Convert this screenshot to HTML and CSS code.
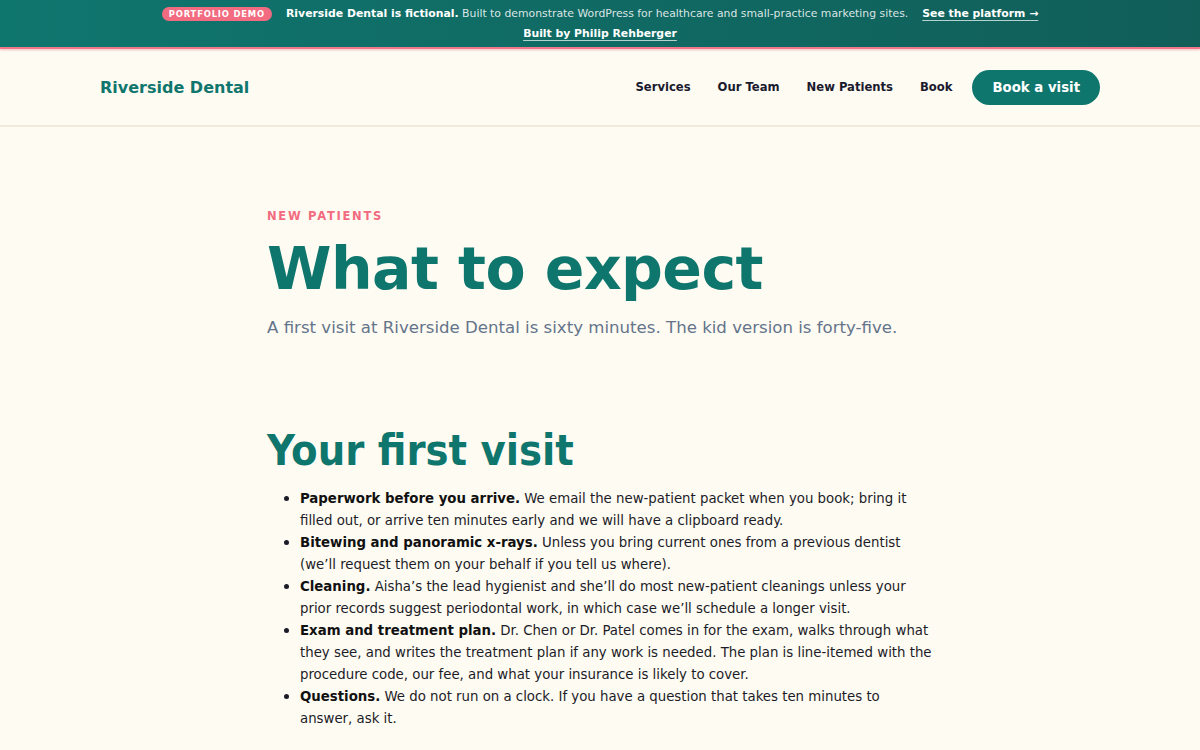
FILE: index.html
```html
<!DOCTYPE html>
<html lang="en">
<head>
<meta charset="utf-8">
<title>What to expect — Riverside Dental</title>
<link rel="stylesheet" href="styles.css">
</head>
<body>
<div class="demo-bar">
  <div class="demo-inner">
    <span class="demo-pill">PORTFOLIO DEMO</span>
    <span class="demo-text"><strong>Riverside Dental is fictional.</strong> Built to demonstrate WordPress for healthcare and small-practice marketing sites.</span>
    <a class="demo-link" href="#">See the platform →</a>
    <a class="demo-link" href="#">Built by Philip Rehberger</a>
  </div>
</div>
<header class="site-header">
  <div class="header-inner">
    <a class="brand" href="#">Riverside Dental</a>
    <nav class="nav">
      <a href="#">Services</a>
      <a href="#">Our Team</a>
      <a href="#">New Patients</a>
      <a href="#">Book</a>
      <a class="btn" href="#">Book a visit</a>
    </nav>
  </div>
</header>
<main class="content">
  <p class="eyebrow">NEW PATIENTS</p>
  <h1 class="title">What to expect</h1>
  <p class="lede">A first visit at Riverside Dental is sixty minutes. The kid version is forty-five.</p>
  <h2 class="section-title">Your first visit</h2>
  <ul class="steps">
    <li><strong>Paperwork before you arrive.</strong> We email the new-patient packet when you book; bring it filled out, or arrive ten minutes early and we will have a clipboard ready.</li>
    <li><strong>Bitewing and panoramic x-rays.</strong> Unless you bring current ones from a previous dentist (we’ll request them on your behalf if you tell us where).</li>
    <li><strong>Cleaning.</strong> Aisha’s the lead hygienist and she’ll do most new-patient cleanings unless your prior records suggest periodontal work, in which case we’ll schedule a longer visit.</li>
    <li><strong>Exam and treatment plan.</strong> Dr. Chen or Dr. Patel comes in for the exam, walks through what they see, and writes the treatment plan if any work is needed. The plan is line-itemed with the procedure code, our fee, and what your insurance is likely to cover.</li>
    <li><strong>Questions.</strong> We do not run on a clock. If you have a question that takes ten minutes to answer, ask it.</li>
  </ul>
</main>
</body>
</html>
```
FILE: styles.css
```css
* { box-sizing: border-box; }
html, body { margin: 0; padding: 0; }
body {
  background: #fefbf2;
  font-family: "DejaVu Sans", sans-serif;
  color: #1c1c28;
}
a { text-decoration: none; color: inherit; }

.demo-bar {
  background: linear-gradient(90deg, #0f766e, #115e59);
  border-bottom: 2px solid #f0788a;
  box-shadow: 0 1px 2px rgba(240, 120, 138, 0.5);
  color: #fff;
  font-size: 10.85px;
  padding: 4px 0 3px;
}
.demo-inner {
  max-width: 1000px;
  margin: 0 auto;
  display: flex;
  flex-wrap: wrap;
  justify-content: center;
  align-items: center;
  column-gap: 14px;
  line-height: 20px;
}
.demo-pill {
  background: #f26b80;
  color: #fff;
  font-size: 8.4px;
  font-weight: bold;
  letter-spacing: 0.1em;
  border-radius: 999px;
  padding: 0 7px;
  line-height: 14px;
}
.demo-text { color: rgba(255, 255, 255, 0.85); }
.demo-text strong { color: #fff; }
.demo-link {
  color: #fff;
  font-weight: bold;
  text-decoration: underline;
  text-underline-offset: 3px;
  text-decoration-color: rgba(255, 255, 255, 0.7);
}

.site-header {
  border-bottom: 2px solid #f1eadb;
}
.header-inner {
  max-width: 1000px;
  margin: 0 auto;
  height: 76px;
  display: flex;
  align-items: center;
  justify-content: space-between;
}
.brand {
  color: #0f766e;
  font-weight: bold;
  font-size: 16px;
}
.nav {
  display: flex;
  align-items: center;
  gap: 27px;
  font-size: 11.6px;
  font-weight: bold;
  color: #1a1a2e;
}
.nav .btn {
  background: #0f766e;
  color: #fff;
  font-size: 13.3px;
  border-radius: 999px;
  padding: 0 20px;
  height: 35px;
  line-height: 35px;
  margin-left: -7px;
}

.content {
  max-width: 666px;
  margin: 0 auto;
  padding-top: 81px;
}
.eyebrow {
  margin: 0;
  color: #f26b80;
  font-size: 11.5px;
  font-weight: bold;
  letter-spacing: 0.15em;
  line-height: 16px;
}
.title {
  margin: 11px 0 0;
  color: #0f766e;
  font-size: 58.5px;
  line-height: 68px;
  letter-spacing: -0.01em;
}
.lede {
  margin: 12px 0 0;
  color: #64748b;
  font-size: 16.6px;
  line-height: 26px;
}
.section-title {
  margin: 83px 0 0;
  font-family: "DejaVu Sans Condensed", "DejaVu Sans", sans-serif;
  color: #0f766e;
  font-size: 43px;
  line-height: 52px;
}
.steps {
  margin: 11px 0 0;
  padding-left: 33px;
  font-family: "DejaVu Sans Condensed", "DejaVu Sans", sans-serif;
  font-size: 14.8px;
  line-height: 22px;
  color: #1c1c28;
}
.steps strong { color: #111; }
```
